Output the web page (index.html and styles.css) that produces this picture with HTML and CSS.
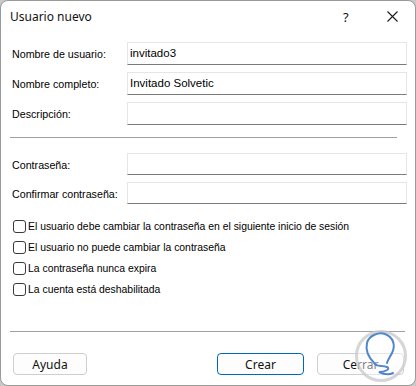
FILE: index.html
```html
<!DOCTYPE html>
<html lang="es">
<head>
  <meta charset="UTF-8">
  <title>Usuario nuevo</title>
  <link rel="stylesheet" href="styles.css">
</head>
<body>

  <div class="dialog">
    <!-- Barra de título -->
    <div class="titlebar">
      <span class="title">Usuario nuevo</span>
      <span class="help">?</span>
      <span class="close">
        <svg width="11" height="11" viewBox="0 0 11 11"><path d="M0.5 0.5 L10.5 10.5 M10.5 0.5 L0.5 10.5" stroke="#1a1a1a" stroke-width="1.1" fill="none"/></svg>
      </span>
    </div>

    <div class="content">
      <!-- Datos del usuario -->
      <div class="fields">
        <label class="label">Nombre de usuario:</label>
        <div class="input">invitado3</div>
        <label class="label">Nombre completo:</label>
        <div class="input">Invitado Solvetic</div>
        <label class="label">Descripción:</label>
        <div class="input"></div>
      </div>

      <div class="sep sep-top"></div>

      <!-- Contraseña -->
      <div class="fields fields-pass">
        <label class="label">Contraseña:</label>
        <div class="input"></div>
        <label class="label">Confirmar contraseña:</label>
        <div class="input"></div>
      </div>

      <!-- Opciones -->
      <div class="checks">
        <div class="check"><span class="box"></span>El usuario debe cambiar la contraseña en el siguiente inicio de sesión</div>
        <div class="check"><span class="box"></span>El usuario no puede cambiar la contraseña</div>
        <div class="check"><span class="box"></span>La contraseña nunca expira</div>
        <div class="check"><span class="box"></span>La cuenta está deshabilitada</div>
      </div>

      <div class="sep sep-bottom"></div>

      <!-- Botones -->
      <div class="buttons">
        <button class="btn btn-help">Ayuda</button>
        <span class="spacer"></span>
        <button class="btn btn-primary">Crear</button>
        <button class="btn">Cerrar</button>
      </div>
    </div>

    <!-- Marca de agua -->
    <svg class="watermark" width="54" height="54" viewBox="0 0 54 54">
      <circle cx="27" cy="27" r="24.5" fill="rgba(255,255,255,0.45)" stroke="rgba(200,200,200,0.75)" stroke-width="3"/>
      <path d="M21 35 C15 29 11 22 13 14 C15 6 25 3 31 5 C39 8 42 16 38 24 C36 28 34 30 33 34" stroke="#4f86cc" stroke-width="2" fill="none" stroke-linecap="round"/>
      <path d="M21 35 C23 38 29 36 33 38 C37 40 31 43 25 43 C29 45 35 46 39 44" stroke="#4f86cc" stroke-width="2" fill="none" stroke-linecap="round"/>
    </svg>
  </div>

</body>
</html>
```

FILE: styles.css
```css
/* Fondo gris detrás de la ventana */
html {
  background-color: #c8c8c8;
}

body {
  margin: 0;
  padding: 0;
  font-family: 'Liberation Sans', Arial, sans-serif;
  font-size: 10.7px;
  color: #000;
}

/* Ventana del diálogo */
.dialog {
  position: relative;
  box-sizing: border-box;
  width: 416px;
  height: 386px;
  background-color: #fff;
  border: 1px solid #9a9a9a;
  border-radius: 8px;
  overflow: hidden;
}

/* Barra de título */
.titlebar {
  display: flex;
  align-items: center;
  height: 31px;
  padding-left: 9px;
  font-family: 'Noto Sans', 'Open Sans', sans-serif;
  font-size: 12px;
  color: #111;
}

.title {
  flex: 1;
}

.help {
  width: 14px;
  margin-right: 30px;
  font-size: 13px;
}

.close {
  display: flex;
  margin-right: 17px;
}

/* Contenido */
.content {
  padding: 10px 8px 0 11px;
}

.fields {
  display: grid;
  grid-template-columns: 115px 1fr;
  row-gap: 7px;
  align-items: center;
}

.label {
  padding-top: 1px;
}

.input {
  box-sizing: border-box;
  height: 23px;
  padding: 4px 2px 0;
  border: 1px solid #e6e6e6;
  border-bottom: 1px solid #7a7a7a;
  font-size: 11.5px;
}

.sep {
  height: 1px;
  background-color: #a0a0a0;
}

.sep-top {
  margin: 12px 10px 15px -2px;
}

.fields-pass .input {
  height: 22px;
}

/* Casillas */
.checks {
  display: flex;
  flex-direction: column;
  gap: 8px;
  margin-top: 16px;
  margin-left: 1px;
  font-size: 10.4px;
}

.check {
  display: flex;
  align-items: center;
  height: 13px;
}

.box {
  box-sizing: border-box;
  width: 13px;
  height: 13px;
  margin-right: 2px;
  border: 1px solid #3a3a3a;
  border-radius: 3px;
  background-color: #fff;
}

.sep-bottom {
  margin: 35px 2px 21px -2px;
}

/* Botones */
.buttons {
  display: flex;
  gap: 13px;
  padding: 0 3px 0 1px;
}

.spacer {
  flex: 1;
}

.btn {
  box-sizing: border-box;
  width: 87px;
  height: 22px;
  padding: 0;
  border: 1px solid #cfcfcf;
  border-radius: 4px;
  background-color: #fdfdfd;
  font-family: 'Noto Sans', 'Open Sans', sans-serif;
  font-size: 12px;
  color: #111;
}

.btn-help {
  width: 74px;
}

.btn-primary {
  border-color: #0067c0;
}

/* Marca de agua */
.watermark {
  position: absolute;
  right: 7px;
  bottom: 2px;
}
```
